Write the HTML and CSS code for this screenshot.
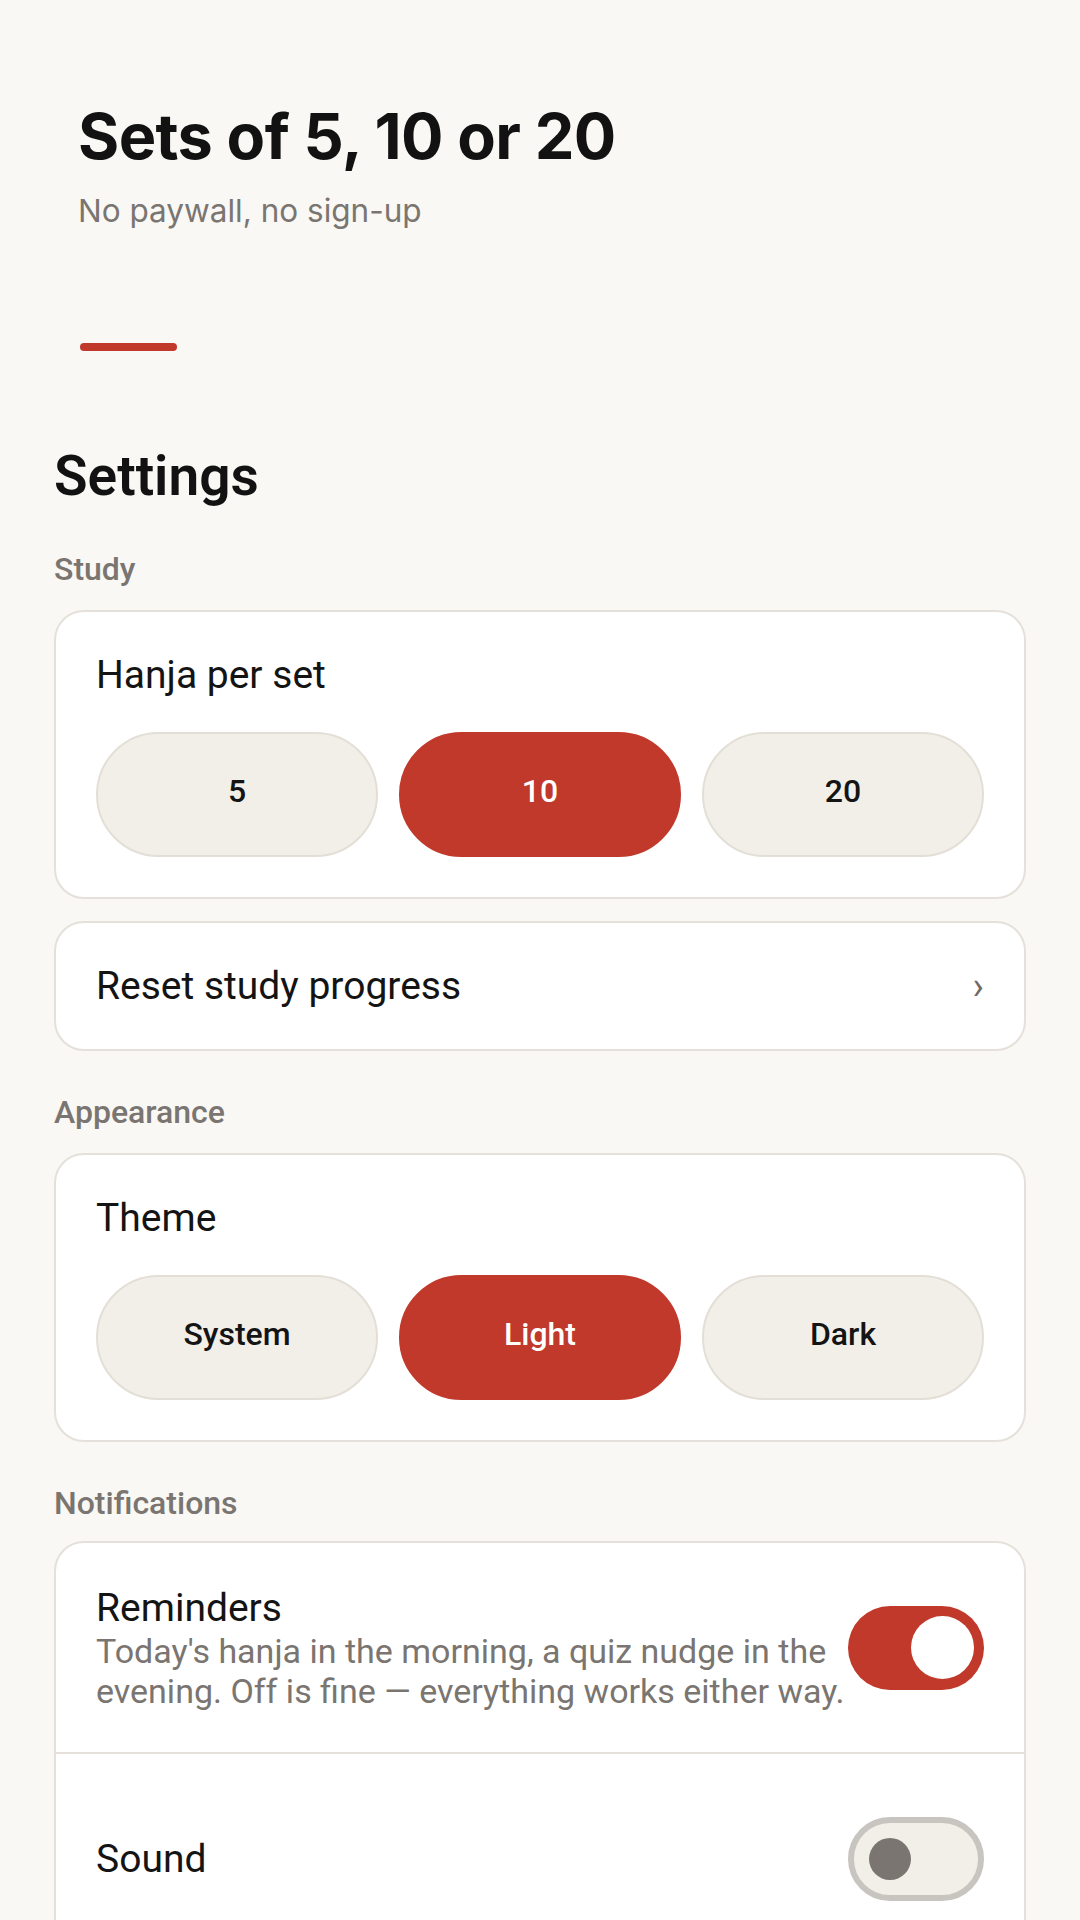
FILE: index.html
```html
<!DOCTYPE html>
<html lang="en">
<head>
<meta charset="utf-8">
<title>Settings</title>
<link rel="stylesheet" href="styles.css">
</head>
<body>
<header class="intro">
  <h1 class="intro-title">Sets of 5, 10 or 20</h1>
  <p class="intro-sub">No paywall, no sign-up</p>
  <div class="intro-bar"></div>
</header>

<main class="settings">
  <h2 class="settings-title">Settings</h2>

  <section class="group">
    <div class="group-label">Study</div>
    <div class="card card-pad">
      <div class="card-label">Hanja per set</div>
      <div class="segmented">
        <button class="seg">5</button>
        <button class="seg seg-active">10</button>
        <button class="seg">20</button>
      </div>
    </div>
    <div class="card card-pad link-row">
      <span class="card-label">Reset study progress</span>
      <span class="chevron">›</span>
    </div>
  </section>

  <section class="group">
    <div class="group-label">Appearance</div>
    <div class="card card-pad">
      <div class="card-label">Theme</div>
      <div class="segmented">
        <button class="seg">System</button>
        <button class="seg seg-active">Light</button>
        <button class="seg">Dark</button>
      </div>
    </div>
  </section>

  <section class="group group-tight">
    <div class="group-label">Notifications</div>
    <div class="card card-list">
      <div class="row">
        <div class="row-info">
          <div class="card-label">Reminders</div>
          <div class="row-desc">Today's hanja in the morning, a quiz nudge in the evening. Off is fine — everything works either way.</div>
        </div>
        <div class="toggle toggle-on"><span class="knob"></span></div>
      </div>
      <div class="row">
        <div class="row-info">
          <div class="card-label">Sound</div>
        </div>
        <div class="toggle toggle-off"><span class="knob"></span></div>
      </div>
    </div>
  </section>
</main>
</body>
</html>
```

FILE: styles.css
```css
* { box-sizing: border-box; }

html, body {
  margin: 0;
  padding: 0;
  background: #f9f8f4;
}

body {
  width: 1080px;
  min-height: 1920px;
  font-family: Roboto, "Liberation Sans", sans-serif;
  color: #141414;
  overflow: hidden;
}

.intro {
  padding: 99px 80px 0 78px;
}

.intro-title {
  margin: 0;
  font-family: Inter, "Liberation Sans", sans-serif;
  font-weight: 700;
  font-size: 63px;
  line-height: 1.2;
  letter-spacing: -0.6px;
  color: #121212;
}

.intro-sub {
  margin: 17px 0 0;
  font-family: Inter, "Liberation Sans", sans-serif;
  font-weight: 400;
  font-size: 31.5px;
  line-height: 1.2;
  color: #7a7570;
}

.intro-bar {
  margin: 114px 0 0 2px;
  width: 97px;
  height: 8px;
  border-radius: 4px;
  background: #c0392b;
}

.settings {
  padding: 0 54px;
  display: flex;
  flex-direction: column;
}

.settings-title {
  margin: 93px 0 0;
  font-size: 55px;
  font-weight: 600;
  line-height: normal;
  color: #121212;
}

.group {
  margin-top: 42px;
  display: flex;
  flex-direction: column;
  gap: 22px;
}

.group-tight {
  gap: 19px;
}

.group-label {
  font-size: 32px;
  font-weight: 500;
  line-height: normal;
  color: #7a7570;
}

.card {
  background: #ffffff;
  border: 2px solid #e5e1da;
  border-radius: 30px;
}

.card-pad {
  padding: 40px;
}

.card-label {
  font-size: 39px;
  font-weight: 400;
  line-height: normal;
  color: #141414;
}

.segmented {
  margin-top: 34px;
  display: grid;
  grid-template-columns: repeat(3, 1fr);
  gap: 21px;
}

.seg {
  height: 125px;
  border: 2px solid #e3dfd7;
  border-radius: 63px;
  background: #f2efe9;
  font-family: Roboto, "Liberation Sans", sans-serif;
  font-size: 32px;
  font-weight: 500;
  color: #141414;
  padding: 0 0 8px;
}

.seg-active {
  background: #c0392b;
  border-color: #c0392b;
  color: #ffffff;
}

.link-row {
  display: flex;
  align-items: center;
  justify-content: space-between;
}

.chevron {
  font-size: 38px;
  line-height: 1;
  color: #6f6a66;
}

.card-list {
  display: flex;
  flex-direction: column;
}

.row {
  min-height: 209px;
  padding: 40px;
  display: flex;
  align-items: center;
  gap: 0;
}

.row + .row {
  border-top: 2px solid #e5e1da;
  min-height: 211px;
}

.row-info {
  flex: 1;
  display: flex;
  flex-direction: column;
}

.row-desc {
  font-size: 34px;
  line-height: normal;
  color: #7a7570;
}

.toggle {
  flex: none;
  width: 136px;
  height: 84px;
  border-radius: 42px;
  display: flex;
  align-items: center;
}

.toggle-on {
  background: #c0392b;
  justify-content: flex-end;
  padding-right: 10px;
}

.toggle-on .knob {
  width: 63px;
  height: 63px;
  border-radius: 50%;
  background: #ffffff;
}

.toggle-off {
  background: #f2efe9;
  border: 6px solid #c8c4bf;
  padding-left: 15px;
}

.toggle-off .knob {
  width: 42px;
  height: 42px;
  border-radius: 50%;
  background: #7a7571;
}
```
